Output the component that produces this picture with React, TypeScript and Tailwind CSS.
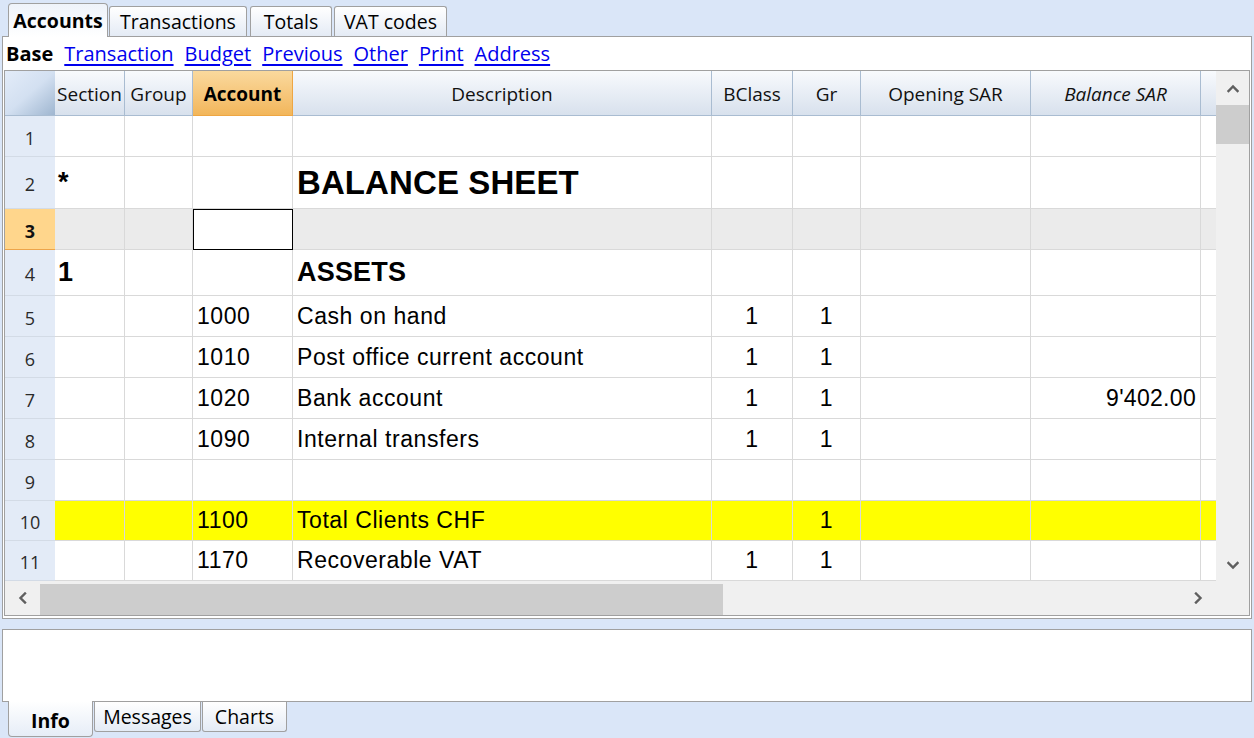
import React from "react";

type Row = {
  n: number;
  h: string;
  sec?: string;
  acc?: string;
  desc?: string;
  descCls?: string;
  bc?: string;
  gr?: string;
  bal?: string;
  yellow?: boolean;
  current?: boolean;
};

const rows: Row[] = [
  { n: 1, h: "h-[41px]" },
  { n: 2, h: "h-[52px]", sec: "*", desc: "BALANCE SHEET", descCls: "font-bold text-[33px] tracking-[0.1px]" },
  { n: 3, h: "h-[41px]", current: true },
  { n: 4, h: "h-[46px]", sec: "1", desc: "ASSETS", descCls: "font-bold text-[27px] tracking-[0.2px]" },
  { n: 5, h: "h-[41px]", acc: "1000", desc: "Cash on hand", bc: "1", gr: "1" },
  { n: 6, h: "h-[41px]", acc: "1010", desc: "Post office current account", bc: "1", gr: "1" },
  { n: 7, h: "h-[41px]", acc: "1020", desc: "Bank account", bc: "1", gr: "1", bal: "9'402.00" },
  { n: 8, h: "h-[41px]", acc: "1090", desc: "Internal transfers", bc: "1", gr: "1" },
  { n: 9, h: "h-[41px]" },
  { n: 10, h: "h-[40px]", acc: "1100", desc: "Total Clients CHF", gr: "1", yellow: true },
  { n: 11, h: "h-[40px]", acc: "1170", desc: "Recoverable VAT", bc: "1", gr: "1" },
];

const COLS = "grid grid-cols-[50px_70px_68px_100px_419px_81px_68px_170px_170px_15px]";

function Chevron({ dir }: { dir: "up" | "down" | "left" | "right" }) {
  const paths: Record<string, string> = {
    up: "M1.5 7 L6 2.5 L10.5 7",
    down: "M1.5 2 L6 6.5 L10.5 2",
    left: "M7 1.5 L2.5 6 L7 10.5",
    right: "M2 1.5 L6.5 6 L2 10.5",
  };
  const vertical = dir === "up" || dir === "down";
  return (
    <svg
      width={vertical ? 12 : 9}
      height={vertical ? 9 : 12}
      viewBox={vertical ? "0 0 12 9" : "0 0 9 12"}
    >
      <path d={paths[dir]} fill="none" stroke="#5f5f5f" strokeWidth="2.4" strokeLinecap="square" />
    </svg>
  );
}

function HeaderCell({
  children,
  cls = "",
}: {
  children?: React.ReactNode;
  cls?: string;
}) {
  return (
    <div
      className={`flex items-center justify-center pt-[3px] border-r border-b border-[#a9bcd1] bg-linear-to-b from-[#f8fafd] to-[#d8e1ed] text-[19px] text-[#111] ${cls}`}
    >
      {children}
    </div>
  );
}

function DataRow({ r }: { r: Row }) {
  const line = "border-r border-b border-[#d9d9d9]";
  const bg = r.yellow ? "bg-[#ffff00]" : r.current ? "bg-[#ebebeb]" : "bg-white";
  const cell = `${line} ${bg} flex items-center overflow-hidden whitespace-nowrap`;
  return (
    <div className={`${COLS} ${r.h}`}>
      <div
        className={`flex items-center justify-center pt-[4px] border-b font-['Open_Sans',sans-serif] text-[18px] tracking-normal ${
          r.current
            ? "bg-[#ffd68c] border-[#eda54a] font-bold text-[#111]"
            : "bg-[#e3ebf7] border-[#d3dbe6] text-[#2a2a2a]"
        }`}
      >
        {r.n}
      </div>
      <div className={`${cell} pl-[3px] font-bold text-[27px] tracking-normal`}>{r.sec}</div>
      <div className={cell}></div>
      {r.current ? (
        <div className="border border-black bg-white"></div>
      ) : (
        <div className={`${cell} pl-[4px]`}>{r.acc}</div>
      )}
      <div className={`${cell} pl-[4px] ${r.descCls ?? ""}`}>{r.desc}</div>
      <div className={`${cell} justify-center`}>{r.bc}</div>
      <div className={`${cell} justify-center`}>{r.gr}</div>
      <div className={cell}></div>
      <div className={`${cell} justify-end pr-[4px] tracking-[0.3px]`}>{r.bal}</div>
      <div className={`border-b border-[#d9d9d9] ${bg}`}></div>
    </div>
  );
}

export default function App() {
  const tabBase =
    "flex items-center justify-center border border-[#a0a0a0] text-[19.5px] text-black";
  return (
    <div className="w-[1254px] h-[738px] bg-[#dae6f8] flex flex-col overflow-hidden font-['Open_Sans',sans-serif] text-black">
      {/* top tabs */}
      <div className="h-[36px] flex items-end pl-[8px] shrink-0">
        <div
          className={`${tabBase} relative z-10 -mb-px w-[100px] h-[34px] border-b-0 rounded-t-[4px] bg-linear-to-b from-[#eef3fa] to-white font-bold`}
        >
          Accounts
        </div>
        <div className={`${tabBase} ml-[1px] w-[138px] h-[30px] border-b-0 rounded-t-[3px] bg-linear-to-b from-white to-[#e4ebf5]`}>
          Transactions
        </div>
        <div className={`${tabBase} ml-[3px] w-[82px] h-[30px] border-b-0 rounded-t-[3px] bg-linear-to-b from-white to-[#e4ebf5]`}>
          Totals
        </div>
        <div className={`${tabBase} ml-[2px] w-[113px] h-[30px] border-b-0 rounded-t-[3px] bg-linear-to-b from-white to-[#e4ebf5]`}>
          VAT codes
        </div>
      </div>

      {/* main panel */}
      <div className="mx-[2px] h-[583px] shrink-0 border border-[#a0a0a0] bg-white flex flex-col">
        <div className="h-[33px] flex items-center pl-[3px] gap-[11px] text-[20px]">
          <span className="font-bold">Base</span>
          {["Transaction", "Budget", "Previous", "Other", "Print", "Address"].map((t) => (
            <span key={t} className="text-[#0000ee] underline underline-offset-[3px]">
              {t}
            </span>
          ))}
        </div>

        <div className="mx-px h-[546px] border border-[#a0a0a0] flex flex-col">
          <div className="flex h-[510px]">
            <div className="w-[1211px] h-[510px] overflow-hidden font-['Liberation_Sans',Arial,sans-serif] text-[23px] tracking-[0.55px] text-black">
              {/* header */}
              <div className={`${COLS} h-[45px] font-['Open_Sans',sans-serif] tracking-normal`}>
                <div className="border-b border-[#a9bcd1] bg-linear-to-br from-[#e3ecf9] via-[#d3e0f1] to-[#9fb6d0]"></div>
                <HeaderCell>Section</HeaderCell>
                <HeaderCell>Group</HeaderCell>
                <div className="flex items-center justify-center pt-[3px] border-r border-b border-[#eea643] bg-linear-to-b from-[#fad99d] to-[#f2b65a] text-[19px] font-bold text-black">
                  Account
                </div>
                <HeaderCell>Description</HeaderCell>
                <HeaderCell>BClass</HeaderCell>
                <HeaderCell>Gr</HeaderCell>
                <HeaderCell>Opening SAR</HeaderCell>
                <HeaderCell cls="italic">Balance SAR</HeaderCell>
                <div className="border-b border-[#a9bcd1] bg-linear-to-b from-[#f8fafd] to-[#d8e1ed]"></div>
              </div>
              {rows.map((r) => (
                <DataRow key={r.n} r={r} />
              ))}
            </div>
            {/* vertical scrollbar */}
            <div className="w-[33px] h-[510px] bg-[#f0f0f0] flex flex-col">
              <div className="h-[34px] flex items-center justify-center pt-[1px]">
                <Chevron dir="up" />
              </div>
              <div className="h-[39px] bg-[#cdcdcd]"></div>
              <div className="flex-1"></div>
              <div className="h-[34px] flex items-center justify-center pt-[2px]">
                <Chevron dir="down" />
              </div>
            </div>
          </div>
          {/* horizontal scrollbar */}
          <div className="flex h-[34px]">
            <div className="w-[1211px] h-[34px] bg-[#f0f0f0] flex items-center">
              <div className="w-[35px] flex items-center justify-center">
                <Chevron dir="left" />
              </div>
              <div className="w-[683px] h-[31px] mt-[2px] bg-[#cdcdcd]"></div>
              <div className="flex-1"></div>
              <div className="w-[35px] flex items-center justify-center">
                <Chevron dir="right" />
              </div>
            </div>
            <div className="w-[33px] h-[34px] bg-[#f0f0f0]"></div>
          </div>
        </div>
      </div>

      {/* info panel */}
      <div className="mx-[2px] mt-[10px] h-[73px] shrink-0 border border-[#a0a0a0] bg-white"></div>

      {/* bottom tabs */}
      <div className="flex items-start pl-[8px]">
        <div
          className={`${tabBase} relative z-10 -mt-px w-[85px] h-[36px] border-t-0 rounded-b-[4px] bg-linear-to-b from-white to-[#e6edf7] font-bold pt-[4px]`}
        >
          Info
        </div>
        <div className={`${tabBase} ml-[1px] w-[107px] h-[30px] border-t-0 rounded-b-[3px] bg-linear-to-b from-white to-[#e4ebf5]`}>
          Messages
        </div>
        <div className={`${tabBase} ml-[1px] w-[85px] h-[30px] border-t-0 rounded-b-[3px] bg-linear-to-b from-white to-[#e4ebf5]`}>
          Charts
        </div>
      </div>
    </div>
  );
}
